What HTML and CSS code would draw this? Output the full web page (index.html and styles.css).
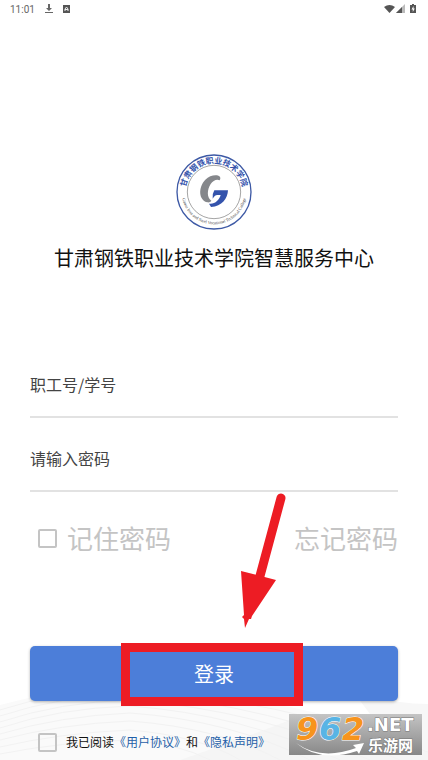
FILE: index.html
```html
<!DOCTYPE html>
<html lang="zh-CN">
  <head>
    <meta charset="UTF-8" />
    <meta name="viewport" content="width=device-width, initial-scale=1.0" />
    <title>甘肃钢铁职业技术学院智慧服务中心</title>
    <link rel="stylesheet" href="styles.css">
  </head>
  <body>
    <div class="page">
      <!-- Background waves -->
      <svg class="waves" viewBox="0 0 428 80" preserveAspectRatio="none" aria-hidden="true">
        <path d="M0 25 Q50 12 110 2 Q250 10 428 62 V80 H0Z" fill="#fafafa" />
        <path d="M355 14 Q400 24 428 24 V80 H200 Q300 50 370 34Z" fill="#f7f7f7" />
        <path d="M180 80 Q250 56 290 40 Q345 58 428 72 V80Z" fill="#f5f5f5" />
        <g fill="none" stroke="#f2f2f2">
          <path d="M0 30 Q60 10 130 9 Q270 18 428 72" />
          <path d="M0 36 Q60 16 130 14 Q270 24 400 80" />
          <path d="M0 42 Q60 22 130 20 Q260 30 370 80" />
          <path d="M0 48 Q60 28 130 26 Q240 34 340 80" />
          <path d="M0 54 Q60 36 130 33 Q230 40 310 80" />
          <path d="M0 60 Q60 44 130 41 Q220 48 280 80" />
          <path d="M0 67 Q60 53 130 50 Q200 56 240 80" />
          <path d="M0 74 Q60 62 130 60 Q180 64 210 80" />
        </g>
      </svg>

      <!-- Status bar -->
      <header class="status-bar">
        <span>11:01</span>
        <svg width="8" height="10" viewBox="0 0 8 10"><path d="M3 0h2v4h2L4 7 1 4h2zM0 8h8v1H0z" fill="#666" /></svg>
        <svg width="7" height="8" viewBox="0 0 7 8"><path d="M0 0h7v8H0z" fill="#555" /><path d="M2 6V4l1.500-2L5 4v2M2 4.500h3" fill="none" stroke="#eee" /></svg>
        <svg class="status-right" width="34" height="10" viewBox="0 0 34 10">
          <path d="M0 3Q5.500-1 11 3L5.500 9z" fill="#555" />
          <path d="M21 0v9h-9z" fill="#bbb" />
          <path d="M18 3v6h-6z" fill="#555" />
          <path d="M28 0h2v1h2v8h-6V1h2z" fill="#555" />
          <path d="M29.500 2 27.500 5.500h1.300V8l2-3.500h-1.300z" fill="#fff" />
        </svg>
      </header>

      <!-- School logo and name -->
      <section class="brand">
        <svg class="logo" viewBox="0 0 228 228" role="img" aria-label="校徽">
          <defs>
            <path id="arc-top" d="M31 137 A86 86 0 1 1 197 137" />
            <path id="arc-bottom" d="M17 114 A97 97 0 0 0 211 114" />
          </defs>
          <circle cx="114" cy="114" r="111" fill="#fff" stroke="#3d59a5" stroke-width="4" />
          <circle cx="114" cy="114" r="80" fill="none" stroke="#777" stroke-width="2" />
          <text class="logo-name"><textPath href="#arc-top" startOffset="50%">甘肃钢铁职业技术学院</textPath></text>
          <text class="logo-english"><textPath href="#arc-bottom" startOffset="50%">Gansu Iron and Steel Vocational Technical College</textPath></text>
          <path d="M131 79C142 61 107 57 88 77C66 100 67 139 95 145C99 146 104 143 106 140C92 131 93 107 104 90C111 80 122 74 131 79Z" fill="#85878b" />
          <path d="M115 109H156C155 133 138 158 105 159L99 149C116 152 130 138 134 123H124C118 123 114 128 110 134Q108 120 115 109Z" fill="#3453ac" />
        </svg>
        <h1 class="title">甘肃钢铁职业技术学院智慧服务中心</h1>
      </section>

      <!-- Login form -->
      <form class="login-form">
        <input class="field" type="text" aria-label="职工号/学号" placeholder="职工号/学号" />
        <input class="field" type="password" aria-label="请输入密码" placeholder="请输入密码" />

        <div class="options">
          <label class="remember"><input class="check" type="checkbox" />记住密码</label>
          <a class="forgot" href="#">忘记密码</a>
        </div>

        <div class="submit">
          <button class="login-btn" type="submit">登录</button>
          <div class="highlight"></div>
          <svg class="arrow" width="48" height="136" viewBox="0 0 48 136" aria-hidden="true">
            <path d="M41 6 20 84" stroke="#ed1c24" stroke-width="9" stroke-linecap="round" />
            <path d="M1 79 36 88 12 124 11 127 9 127 5 136 4 127 2 125 4 123Z" fill="#ed1c24" />
          </svg>
        </div>

        <div class="agreement">
          <input class="check" type="checkbox" id="agree" />
          <div><label for="agree">我已阅读</label><a href="#">《用户协议》</a>和<a href="#">《隐私声明》</a></div>
        </div>
      </form>

      <!-- Site watermark -->
      <svg class="watermark" width="133" height="41" viewBox="0 0 133 41" role="img" aria-label="962.NET 乐游网">
        <defs>
          <linearGradient id="plate" x2="0" y2="1">
            <stop offset="0" stop-color="#c4c4c4" />
            <stop offset="1" stop-color="#888" />
          </linearGradient>
        </defs>
        <rect width="133" height="41" fill="url(#plate)" />
        <path d="M7 29Q32 47 67 34L64 31 75 29 70 40 68 37Q31 49 7 29Z" fill="#fff" />
        <g class="mark-digits">
          <text x="7" y="26" fill="#f7941d">9</text>
          <text x="30" y="26" fill="#58b4e5">6</text>
          <text x="53" y="26" fill="#f7941d">2</text>
        </g>
        <text class="mark-net" x="78" y="17">.NET</text>
        <text class="mark-name" x="79" y="37">乐游网</text>
      </svg>
    </div>
  </body>
</html>
```

FILE: styles.css
```css
* {
  box-sizing: border-box;
}

body {
  margin: 0;
  background: #fff;
  color: #111;
  font-family: "Noto Sans CJK SC", sans-serif;
}

.page {
  position: relative;
  min-height: 100vh;
  display: flex;
  flex-direction: column;
}

/* Background waves */
.waves {
  position: absolute;
  left: 0;
  bottom: 0;
  width: 100%;
  height: 80px;
}

/* Status bar */
.status-bar {
  display: flex;
  align-items: center;
  gap: 10px;
  height: 18px;
  padding: 0 10px;
  color: #666;
  font-family: Roboto, sans-serif;
  font-size: 10px;
}

.status-right {
  margin-left: auto;
}

/* Logo and name */
.brand {
  display: flex;
  flex-direction: column;
  align-items: center;
  gap: 12px;
  padding-top: 136px;
}

.logo {
  width: 76px;
  height: 76px;
}

.logo-name {
  fill: #3453ac;
  font-size: 24px;
  font-weight: bold;
  text-anchor: middle;
}

.logo-english {
  fill: #444;
  font-family: "Liberation Serif", serif;
  font-size: 13px;
  text-anchor: middle;
}

.title {
  margin: 0;
  font-size: 20px;
  font-weight: 400;
  line-height: 32px;
}

/* Login form */
.login-form {
  position: relative;
  display: flex;
  flex-direction: column;
  padding: 80px 30px 0;
}

.field {
  width: 100%;
  height: 64px;
  margin-bottom: 10px;
  padding: 0 0 2px;
  border: none;
  border-bottom: 2px solid #e2e2e2;
  background: transparent;
  color: #444;
  font-family: inherit;
  font-size: 16px;
}

.field::placeholder {
  color: #444;
  opacity: 1;
}

.check {
  flex: none;
  appearance: none;
  width: 19px;
  height: 19px;
  margin: 0;
  border: 2px solid #c4c4c4;
  border-radius: 2px;
}

.check:checked {
  background: #4c7ed9;
}

.options {
  display: flex;
  justify-content: space-between;
  align-items: center;
  margin-top: 16px;
  padding-left: 8px;
  color: #c4c4c4;
  font-size: 26px;
  line-height: 40px;
}

.remember {
  display: flex;
  align-items: center;
  gap: 10px;
}

.forgot {
  color: inherit;
  text-decoration: none;
}

.submit {
  position: relative;
  margin-top: 88px;
}

.login-btn {
  display: block;
  width: 100%;
  height: 55px;
  border: none;
  border-radius: 5px;
  background: #4c7ed9;
  box-shadow: 0 1px 3px rgba(0, 0, 0, 0.3);
  color: #fff;
  font-family: inherit;
  font-size: 20px;
  cursor: pointer;
}

/* Frame and arrow over the login button */
.highlight {
  position: absolute;
  top: -3px;
  bottom: -5px;
  left: 50%;
  width: 182px;
  margin-left: -93px;
  border: 9px solid #ed1c24;
  pointer-events: none;
}

.arrow {
  position: absolute;
  left: 50%;
  bottom: 100%;
  margin: 0 0 18px 26px;
  fill: none;
  pointer-events: none;
}

.agreement {
  display: flex;
  align-items: center;
  gap: 9px;
  margin-top: 30px;
  padding-left: 8px;
  font-size: 12px;
  line-height: 22px;
}

.agreement a {
  color: #1f5fa8;
  text-decoration: none;
}

/* Site watermark */
.watermark {
  position: absolute;
  right: 6px;
  bottom: 5px;
  overflow: visible;
}

.mark-digits {
  font-family: "DejaVu Sans", sans-serif;
  font-size: 32px;
  font-style: italic;
  font-weight: bold;
  stroke: #fff;
  stroke-width: 1px;
  paint-order: stroke;
}

.mark-net,
.mark-name {
  fill: #fff;
  stroke: #777;
  stroke-width: 1px;
  paint-order: stroke;
  font-weight: bold;
}

.mark-net {
  font-family: "DejaVu Sans", sans-serif;
  font-size: 18px;
}

.mark-name {
  font-size: 15px;
}
```
